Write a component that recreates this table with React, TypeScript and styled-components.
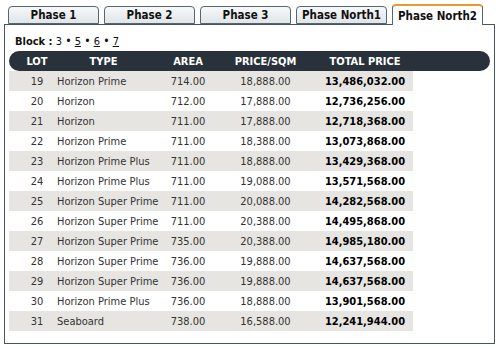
import React from "react";
import styled, { createGlobalStyle } from "styled-components";

const GlobalStyle = createGlobalStyle`
  body {
    margin: 0;
    background: #ffffff;
    font-family: "DejaVu Sans Condensed", "DejaVu Sans", Tahoma, sans-serif;
    font-size: 11px;
    color: #222;
  }
`;

const Page = styled.div`
  width: 500px;
  height: 349px;
  padding-top: 5px;
  box-sizing: border-box;
`;

const TabStrip = styled.div`
  display: flex;
  align-items: flex-end;
  gap: 5px;
  padding-left: 8px;
  height: 19px;
  position: relative;
  z-index: 1;
`;

const Tab = styled.div<{ $active?: boolean }>`
  width: 91px;
  box-sizing: border-box;
  height: ${(p) => (p.$active ? "21px" : "18px")};
  margin-bottom: ${(p) => (p.$active ? "-1px" : "0")};
  border: 1px solid #566670;
  border-bottom: ${(p) => (p.$active ? "none" : "1px solid #566670")};
  border-top: ${(p) => (p.$active ? "2px solid #e59b2e" : "1px solid #566670")};
  border-radius: 4px 4px 0 0;
  background: ${(p) =>
    p.$active ? "#ffffff" : "linear-gradient(#f7f8f9, #dfe5e8)"};
  display: flex;
  align-items: center;
  justify-content: center;
  font-weight: bold;
  font-size: 11.5px;
  color: #111;
`;

const Panel = styled.div`
  margin: 0 5px 0 4px;
  height: 320px;
  box-sizing: border-box;
  border: 1px solid #47565c;
  padding: 6px 4px 0 4px;
`;

const BlockLine = styled.div`
  padding-left: 6px;
  height: 20px;
  line-height: 20px;
  color: #111;
`;

const BlockLabel = styled.span`
  font-weight: bold;
`;

const Dot = styled.span`
  font-size: 12px;
`;

const BlockLink = styled.a`
  color: #111;
  text-decoration: underline;
`;

const cols = "48px 93px 76px 79px 108px";

const HeaderBar = styled.div`
  display: grid;
  grid-template-columns: ${cols} 1fr;
  height: 20px;
  align-items: center;
  background: #29323a;
  border-radius: 10px;
  color: #ffffff;
  font-weight: bold;
`;

const HeadCell = styled.div<{ $pad?: number }>`
  text-align: center;
  padding-left: ${(p) => p.$pad ?? 0}px;
`;

const Row = styled.div<{ $shade: boolean }>`
  display: grid;
  grid-template-columns: ${cols};
  width: 404px;
  height: 20px;
  align-items: center;
  background: ${(p) => (p.$shade ? "#e6e5e1" : "#ffffff")};
  color: #333;
`;

const Cell = styled.div<{ $align?: string; $pad?: number }>`
  text-align: ${(p) => p.$align ?? "center"};
  padding-left: ${(p) => p.$pad ?? 0}px;
  white-space: nowrap;
`;

const Total = styled(Cell)`
  font-weight: bold;
  color: #000;
`;

const lots = [
  [19, "Horizon Prime", "714.00", "18,888.00", "13,486,032.00"],
  [20, "Horizon", "712.00", "17,888.00", "12,736,256.00"],
  [21, "Horizon", "711.00", "17,888.00", "12,718,368.00"],
  [22, "Horizon Prime", "711.00", "18,388.00", "13,073,868.00"],
  [23, "Horizon Prime Plus", "711.00", "18,888.00", "13,429,368.00"],
  [24, "Horizon Prime Plus", "711.00", "19,088.00", "13,571,568.00"],
  [25, "Horizon Super Prime", "711.00", "20,088.00", "14,282,568.00"],
  [26, "Horizon Super Prime", "711.00", "20,388.00", "14,495,868.00"],
  [27, "Horizon Super Prime", "735.00", "20,388.00", "14,985,180.00"],
  [28, "Horizon Super Prime", "736.00", "19,888.00", "14,637,568.00"],
  [29, "Horizon Super Prime", "736.00", "19,888.00", "14,637,568.00"],
  [30, "Horizon Prime Plus", "736.00", "18,888.00", "13,901,568.00"],
  [31, "Seaboard", "738.00", "16,588.00", "12,241,944.00"],
];

const tabs = ["Phase 1", "Phase 2", "Phase 3", "Phase North1", "Phase North2"];

export default function App() {
  return (
    <Page>
      <GlobalStyle />
      <TabStrip>
        {tabs.map((t) => (
          <Tab key={t} $active={t === "Phase North2"}>
            {t}
          </Tab>
        ))}
      </TabStrip>
      <Panel>
        <BlockLine>
          <BlockLabel>Block :</BlockLabel> 3 <Dot>•</Dot> <BlockLink href="#">5</BlockLink>{" "}
          <Dot>•</Dot> <BlockLink href="#">6</BlockLink> <Dot>•</Dot>{" "}
          <BlockLink href="#">7</BlockLink>
        </BlockLine>
        <HeaderBar>
          <HeadCell $pad={8}>LOT</HeadCell>
          <HeadCell>TYPE</HeadCell>
          <HeadCell>AREA</HeadCell>
          <HeadCell>PRICE/SQM</HeadCell>
          <HeadCell $pad={12}>TOTAL PRICE</HeadCell>
          <div />
        </HeaderBar>
        {lots.map((l, i) => (
          <Row key={l[0]} $shade={i % 2 === 0}>
            <Cell $pad={8}>{l[0]}</Cell>
            <Cell $align="left">{l[1]}</Cell>
            <Cell>{l[2]}</Cell>
            <Cell>{l[3]}</Cell>
            <Total $pad={12}>{l[4]}</Total>
          </Row>
        ))}
      </Panel>
    </Page>
  );
}
